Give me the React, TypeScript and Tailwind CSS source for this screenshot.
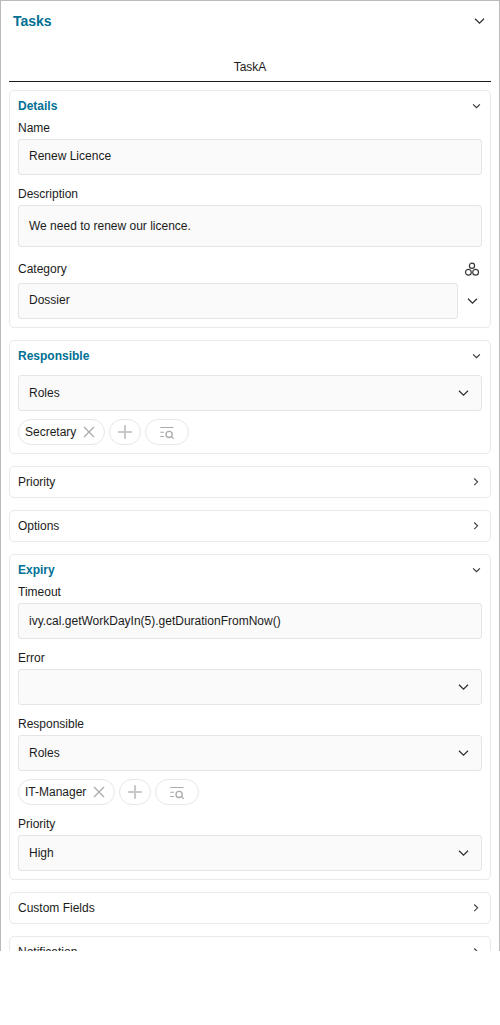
import type { ReactNode } from 'react';

function Chevron({ size = 'md' }: { size?: 'md' | 'sm' }) {
  return size === 'md' ? (
    <svg width="17" height="16" viewBox="0 0 17 16" fill="none" stroke="#2e2e2e" strokeWidth="1.25">
      <path d="M4 5.8 8.5 10.1l4.5-4.3" />
    </svg>
  ) : (
    <svg width="11" height="12" viewBox="0 0 11 12" fill="none" stroke="#333" strokeWidth="1.15">
      <path d="M2.1 4.4 5.5 7.6l3.4-3.2" />
    </svg>
  );
}

function ChevronRight() {
  return (
    <svg width="12" height="12" viewBox="0 0 12 12" fill="none" stroke="#444" strokeWidth="1.15">
      <path d="M4.2 2.5 7.6 5.8 4.2 9.1" />
    </svg>
  );
}

function CategoryIcon() {
  return (
    <svg width="16" height="16" viewBox="0 0 16 16" fill="none" stroke="#383838" strokeWidth="1.2">
      <circle cx="8" cy="4.7" r="2.6" />
      <circle cx="4.4" cy="11.3" r="2.9" />
      <circle cx="11.6" cy="11.3" r="2.9" />
    </svg>
  );
}

function Card({ title, children }: { title: string; children?: ReactNode }) {
  return (
    <section className="flex shrink-0 flex-col rounded-[5px] border border-[#e9e9e9] px-2">
      <div className="flex h-[30px] items-center justify-between">
        <h3 className={children ? 'font-bold text-[#007095]' : ''}>{title}</h3>
        {children ? <Chevron size="sm" /> : <ChevronRight />}
      </div>
      {children && <div className="flex flex-col gap-3 pb-2">{children}</div>}
    </section>
  );
}

function Field({ label, children }: { label: string; children: ReactNode }) {
  return (
    <div className="flex flex-col gap-1">
      <label className="h-3.5 leading-[14px]">{label}</label>
      {children}
    </div>
  );
}

const box = 'flex items-center rounded-[3px] border border-[#e5e5e5] bg-[#fafafa]';

function Input({ value }: { value: string }) {
  return <div className={`${box} h-9 grow px-2.5 pb-0.5`}>{value}</div>;
}

function Select({ value }: { value: string }) {
  return (
    <div className={`${box} h-9 justify-between pr-[9px] pl-2.5`}>
      <span>{value}</span>
      <Chevron />
    </div>
  );
}

function Roles({ name }: { name: string }) {
  const pill = 'flex h-[26px] items-center rounded-full border border-[#e7e7e7]';
  return (
    <div className="flex flex-col gap-2">
      <Select value="Roles" />
      <div className="flex gap-1">
        <div className={`${pill} gap-1 pr-[7px] pl-1.5`}>
          <span>{name}</span>
          <svg width="17" height="16" viewBox="0 0 17 16" fill="none" stroke="#aaa" strokeWidth="1.3">
            <path d="m4 3 10 10M14 3 4 13" />
          </svg>
        </div>
        <div className={`${pill} w-8 justify-center`}>
          <svg width="16" height="16" viewBox="0 0 16 16" fill="none" stroke="#c8c8c8" strokeWidth="2">
            <path d="M1.2 8h13.6M8 1.2v13.6" />
          </svg>
        </div>
        <div className={`${pill} w-11 justify-center`}>
          <svg width="16" height="16" viewBox="0 0 16 16" fill="none" stroke="#ababab" strokeWidth="1.1">
            <path d="M1.2 3.5h13.3M1.2 8.3h3.8M1.2 12.5h3.8M12.4 12.5l2.3 2.4" />
            <circle cx="10.1" cy="10.4" r="3.1" strokeWidth="1.3" />
          </svg>
        </div>
      </div>
    </div>
  );
}

export default function App() {
  return (
    <main className="flex h-[951px] flex-col overflow-hidden border border-b-0 border-[#bbb] bg-white px-2 font-['Liberation_Sans',Arial,sans-serif] text-[12px] leading-4 text-[#1b1b1b]">
      <header className="flex h-10 shrink-0 items-center justify-between pr-[3px] pl-1">
        <h2 className="text-[14px] font-bold text-[#007095]">Tasks</h2>
        <Chevron />
      </header>
      <div className="mt-3 flex h-[29px] shrink-0 items-center justify-center border-b border-[#1b1b1b]">TaskA</div>
      <div className="mt-2 flex flex-col gap-3">
        <Card title="Details">
          <Field label="Name">
            <Input value="Renew Licence" />
          </Field>
          <Field label="Description">
            <div className={`${box} h-[42px] px-2.5`}>We need to renew our licence.</div>
          </Field>
          <div className="flex flex-col gap-1">
            <div className="flex h-5 items-center justify-between pr-0.5">
              <label>Category</label>
              <CategoryIcon />
            </div>
            <div className="flex items-center">
              <Input value="Dossier" />
              <div className="flex w-6 justify-end pr-px">
                <Chevron />
              </div>
            </div>
          </div>
        </Card>
        <Card title="Responsible">
          <div className="pt-1">
            <Roles name="Secretary" />
          </div>
        </Card>
        <Card title="Priority" />
        <Card title="Options" />
        <Card title="Expiry">
          <Field label="Timeout">
            <div className={`${box} h-9 px-2.5`}>ivy.cal.getWorkDayIn(5).getDurationFromNow()</div>
          </Field>
          <Field label="Error">
            <Select value="" />
          </Field>
          <Field label="Responsible">
            <Roles name="IT-Manager" />
          </Field>
          <Field label="Priority">
            <Select value="High" />
          </Field>
        </Card>
        <Card title="Custom Fields" />
        <Card title="Notification" />
      </div>
    </main>
  );
}
